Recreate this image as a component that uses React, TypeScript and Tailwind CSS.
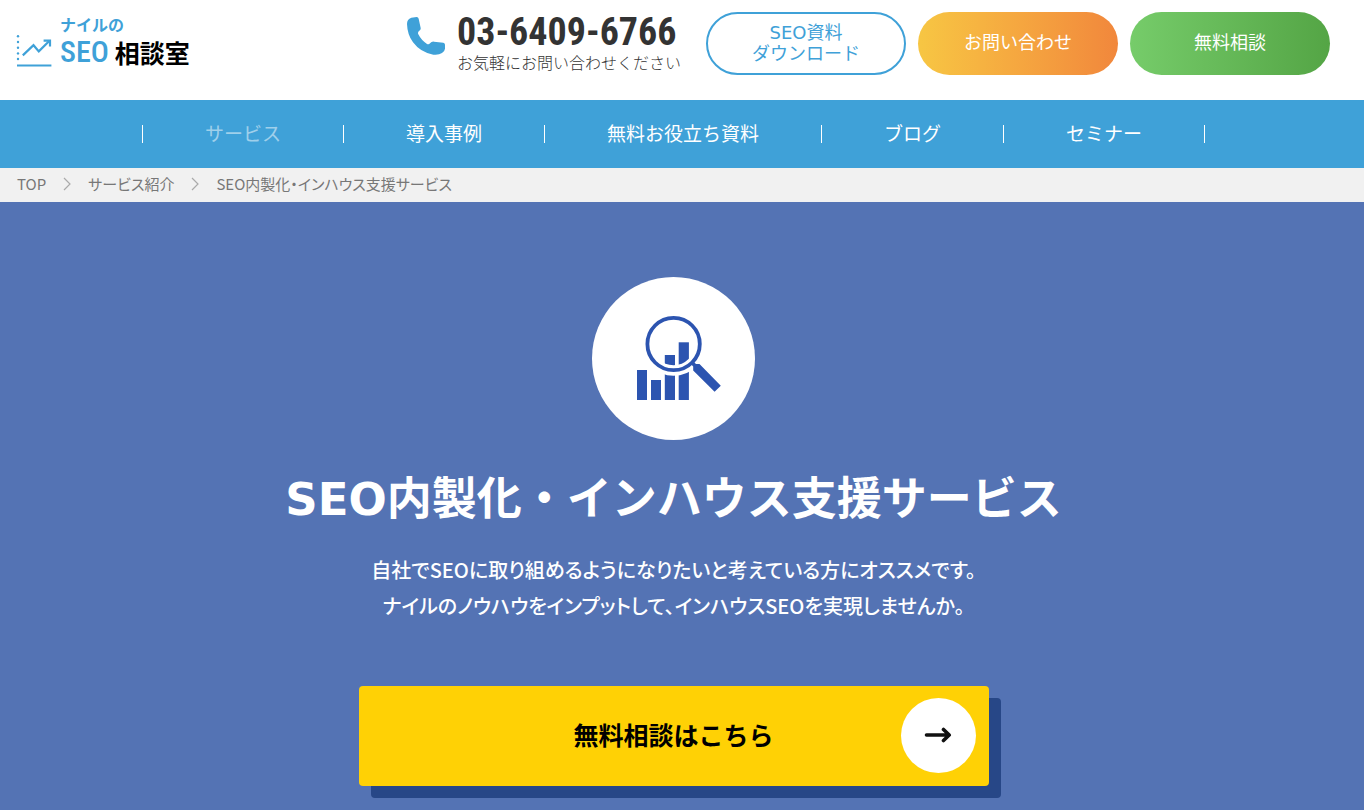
import clsx from "clsx";

interface NavItem {
  label: string;
  href: string;
  active?: boolean;
}

const navItems: NavItem[] = [
  { label: "サービス", href: "#service", active: true },
  { label: "導入事例", href: "#case" },
  { label: "無料お役立ち資料", href: "#document" },
  { label: "ブログ", href: "#blog" },
  { label: "セミナー", href: "#seminar" },
];

const actions = [
  {
    lines: ["SEO資料", "ダウンロード"],
    href: "#download",
    className: "border-2 border-[#3fa1d8] bg-white text-[#3fa1d8]",
  },
  {
    lines: ["お問い合わせ"],
    href: "#contact",
    className: "bg-linear-to-r from-[#f7c643] to-[#f1873c] text-white",
  },
  {
    lines: ["無料相談"],
    href: "#consult",
    className: "bg-linear-to-r from-[#76cc6a] to-[#54a545] text-white",
  },
];

function ChartLogo() {
  return (
    <svg viewBox="16 33 36 34" className="h-[34px] w-9" fill="none" stroke="#3fa1d8" aria-hidden="true">
      <g fill="#3fa1d8" stroke="none">
        <circle cx="18" cy="35.2" r="1.2" />
        <circle cx="18" cy="41" r="1.2" />
        <circle cx="18" cy="46.7" r="1.2" />
        <circle cx="18" cy="52.4" r="1.2" />
        <circle cx="18" cy="58" r="1.2" />
      </g>
      <path d="M17 64.4H51.4" strokeWidth="2" />
      <path d="M22.8 54.4L33.5 44.2L38.8 50.4L49 40.2" strokeWidth="2.2" />
      <path d="M43.6 39.6H50V45.6" strokeWidth="2.2" />
    </svg>
  );
}

function PhoneIcon() {
  return (
    <svg viewBox="57 51 114 114" className="mt-[5px] size-[38px]" fill="#3fa1d8" aria-hidden="true">
      <path d="M70 53L86 51Q91 51 92 56L98 84Q99 89 94 92Q88 96 91 103Q100 121 116 131Q122 135 126 130Q131 124 138 125L166 128Q171 129 171 134V146Q170 154 162 159Q152 166 136 164Q98 158 75 127Q58 104 57 72Q57 57 70 53Z" />
    </svg>
  );
}

function AnalysisIcon() {
  return (
    <svg viewBox="0 0 163 163" className="size-[163px]" aria-hidden="true">
      <circle cx="81.5" cy="81.5" r="81.5" fill="#fff" />
      <g fill="#2c54b0">
        <rect x="45" y="93" width="10" height="30" />
        <rect x="59" y="103" width="10" height="20" />
        <rect x="72.8" y="78" width="10.2" height="45" />
        <rect x="86.7" y="65.3" width="10.2" height="57.7" />
      </g>
      <circle cx="81.6" cy="67" r="26.5" fill="none" stroke="#fff" strokeWidth="10.6" />
      <circle cx="81.6" cy="67" r="26.2" fill="none" stroke="#2c54b0" strokeWidth="3.8" />
      <path d="M98 86L100.5 83.5L104 87H107.5L128.8 108.7L122.6 114.8L101.2 93.6V89.4Z" fill="#2c54b0" />
    </svg>
  );
}

function Separator() {
  return (
    <svg viewBox="0 0 8 14" className="h-[14px] w-2" fill="none" stroke="#aaa" strokeWidth="1.2" aria-hidden="true">
      <path d="M1 1L7 7L1 13" />
    </svg>
  );
}

function Header() {
  return (
    <header className="flex min-h-[100px] items-start justify-between bg-white pt-3 pr-[34px] pl-4">
      <a href="#top" className="flex items-end gap-2 font-bold">
        <ChartLogo />
        <span className="flex flex-col">
          <span className="text-[16px] leading-6 text-[#3fa1d8]">ナイルの</span>
          <span className="flex items-center gap-[6px] leading-8">
            <span className="font-['Roboto_Condensed','Liberation_Sans',sans-serif] text-[30px] font-medium text-[#3fa1d8]">
              SEO
            </span>
            <span className="text-[25px] text-black">相談室</span>
          </span>
        </span>
      </a>

      <div className="flex items-start gap-[25px]">
        <a href="tel:03-6409-6766" className="flex items-start gap-3 text-[#333]">
          <PhoneIcon />
          <span className="flex flex-col">
            <span className="font-['Roboto_Condensed','Liberation_Sans',sans-serif] text-[38px] leading-10 font-bold">
              03-6409-6766
            </span>
            <span className="text-[16px] leading-5 font-light">お気軽にお問い合わせください</span>
          </span>
        </a>
        <div className="flex gap-3">
          {actions.map((action) => (
            <a
              key={action.href}
              href={action.href}
              className={clsx(
                "flex h-[63px] w-[200px] flex-col items-center justify-center rounded-full pb-[2px] font-['DejaVu_Sans','Noto_Sans_CJK_JP',sans-serif] text-[18px] leading-[21px]",
                action.className
              )}
            >
              {action.lines.map((line) => (
                <span key={line}>{line}</span>
              ))}
            </a>
          ))}
        </div>
      </div>
    </header>
  );
}

function GlobalNav() {
  return (
    <nav className="bg-[#3fa1d8] pr-[17px]">
      <ul className="flex h-[68px] items-center justify-center">
        {navItems.map((item) => (
          <li
            key={item.href}
            className="flex h-[18px] items-center border-r border-white px-[62px] pb-[2px] text-[19px] first:border-l"
          >
            <a href={item.href} className={item.active ? "text-white/50" : "text-white"}>
              {item.label}
            </a>
          </li>
        ))}
      </ul>
    </nav>
  );
}

function Breadcrumb() {
  return (
    <nav aria-label="breadcrumb" className="bg-[#f1f1f1] px-[17px]">
      <ol className="flex h-[34px] items-center gap-[17px] pb-[2px] text-[15px] text-[#777] [font-feature-settings:'palt']">
        <li>
          <a href="#top">TOP</a>
        </li>
        <Separator />
        <li>
          <a href="#service">サービス紹介</a>
        </li>
        <Separator />
        <li>SEO内製化・インハウス支援サービス</li>
      </ol>
    </nav>
  );
}

function Hero() {
  return (
    <main className="flex grow flex-col items-center bg-[#5473b4] pt-[75px] pr-[17px] pb-6 text-white">
      <AnalysisIcon />
      <h1 className="mt-[26px] font-['DejaVu_Sans','Noto_Sans_CJK_JP',sans-serif] text-[45px] leading-[68px] font-bold">
        SEO内製化・インハウス支援サービス
      </h1>
      <p className="mt-[18px] text-center text-[20px] leading-9 font-medium [font-feature-settings:'palt']">
        自社でSEOに取り組めるようになりたいと考えている方にオススメです。
        <br />
        ナイルのノウハウをインプットして、インハウスSEOを実現しませんか。
      </p>
      <a
        href="#consult"
        className="relative mt-[62px] flex h-[100px] w-full max-w-[630px] items-center justify-center rounded bg-[#ffd105] pb-[2px] text-[25px] font-bold text-black shadow-[12px_12px_0_#274787]"
      >
        無料相談はこちら
        <span className="absolute right-[13px] flex size-[75px] items-center justify-center rounded-full bg-white">
          <svg viewBox="0 0 28 16" className="h-4 w-7" fill="none" stroke="#111" strokeWidth="3.6" strokeLinecap="round" strokeLinejoin="round" aria-hidden="true">
            <path d="M2.5 8H25M19.5 2.5L25.2 8L19.5 13.5" />
          </svg>
        </span>
      </a>
    </main>
  );
}

export default function App() {
  return (
    <div className="flex min-h-screen flex-col font-['Noto_Sans_CJK_JP',sans-serif]" lang="ja">
      <Header />
      <GlobalNav />
      <Breadcrumb />
      <Hero />
    </div>
  );
}
